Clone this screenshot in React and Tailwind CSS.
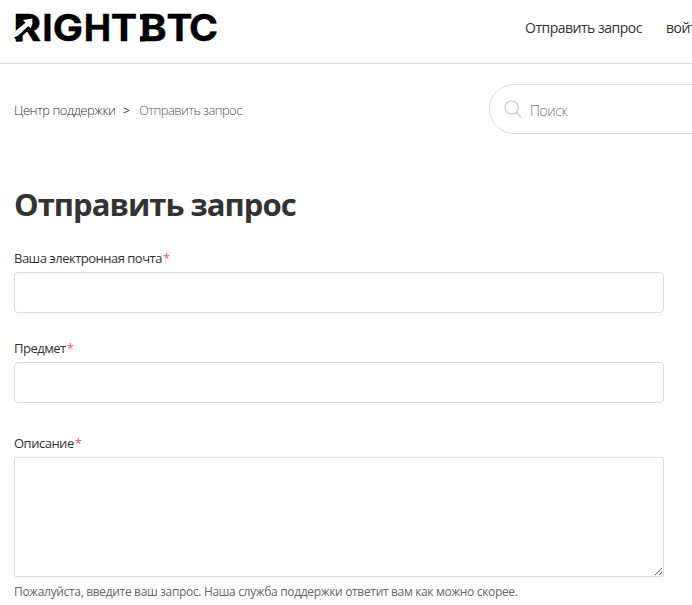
const letters = [
  { c: "R", x: -0.8, sx: 1.15 },
  { c: "I", x: 28.3, sx: 1 },
  { c: "G", x: 38.7, sx: 1.09 },
  { c: "H", x: 69.7, sx: 0.99 },
  { c: "T", x: 96.7, sx: 1.07 },
  { c: "B", x: 126.3, sx: 1.08 },
  { c: "T", x: 152.5, sx: 1.05 },
  { c: "C", x: 175.1, sx: 1.06 },
];

function Logo() {
  return (
    <svg className="block h-[36px] w-[210px] overflow-visible" viewBox="0 0 210 36" role="img">
      {letters.map((l, i) => (
        <text
          key={i}
          transform={`translate(${l.x} 31.3) scale(${l.sx} 1)`}
          fontFamily="Inter, sans-serif"
          fontSize="37"
          fontWeight="700"
          fill="#000"
          stroke="#000"
          strokeWidth="0.4"
        >
          {l.c}
        </text>
      ))}
      <path d="M126 4.2h5v5.2h-5zM126 26.3h5v5.2h-5z" fill="#000" />
      <path d="M2 4.2h14v12L2 20z" fill="#000" />
      <path d="M-1 24.5 L2 20.5 L11.5 12.8 L9 10 L18.5 8.5 L17 18.5 L14.3 16 L4 26.5 L-1 29 Z" fill="#fff" />
      <path d="M0 27.5 C5 26 8.5 22 12.5 17.8 L15 20 L8 26 L8 31.5 L2 31.5 L2 29.5Z" fill="#000" />
    </svg>
  );
}

function Label({ children, className }) {
  return (
    <label className={"block h-[20px] whitespace-nowrap text-[13px] leading-[20px] tracking-[-0.5px] text-[#333] " + className}>
      {children}
      <span className="ml-[1px] text-[#e35b66]">*</span>
    </label>
  );
}

export default function App() {
  return (
    <div className="h-[605px] w-full overflow-hidden bg-white font-['Open_Sans','Noto_Sans',sans-serif] text-[#333]">
      <header className="flex h-[64px] items-start border-b border-[#ddd] pl-[14px]">
        <div className="pt-[10px]">
          <Logo />
        </div>
        <nav className="ml-[301px] flex gap-[24px] pt-[18px] text-[14px] leading-[20px] tracking-[-0.5px] whitespace-nowrap">
          <a className="w-[117px]">Отправить запрос</a>
          <a>войти</a>
        </nav>
      </header>
      <div className="flex h-[90px] pt-[20px] pl-[14px]">
        <div className="flex w-[475px] shrink-0 pt-[16px] text-[13px] leading-[20px] font-light whitespace-nowrap">
          <span className="w-[109px] tracking-[-0.47px]">Центр поддержки</span>
          <span className="w-[16px] pt-px text-[12px] font-normal">&gt;</span>
          <span className="tracking-[-0.58px] text-[#555]">Отправить запрос</span>
        </div>
        <div className="flex h-[50px] w-[320px] shrink-0 items-center rounded-full border border-[#ddd] pl-[14px]">
          <svg className="h-[18px] w-[18px]" viewBox="0 0 18 18" fill="none" stroke="#ccc" strokeWidth="1.3">
            <circle cx="7.7" cy="7.5" r="6.6" />
            <path d="M12.5 12.3 L17 17.2" />
          </svg>
          <span className="pt-[3px] pl-[8px] text-[14px] leading-[20px] font-light tracking-[-0.45px] text-[#777]">Поиск</span>
        </div>
      </div>
      <main className="w-[664px] pl-[14px]">
        <h1 className="mt-[29px] h-[43px] text-[31px] leading-[42px] font-bold tracking-[-0.98px] whitespace-nowrap">Отправить запрос</h1>
        <form>
          <Label className="mt-[22px]">Ваша электронная почта</Label>
          <input className="mt-[4px] block h-[41px] w-full rounded-[4px] border border-[#ddd]" />
          <Label className="mt-[25px]">Предмет</Label>
          <input className="mt-[4px] block h-[41px] w-full rounded-[4px] border border-[#ddd]" />
          <Label className="mt-[30px]">Описание</Label>
          <textarea className="mt-[4px] block h-[120px] w-full resize rounded-[2px] border border-[#ddd]" />
          <p className="mt-[5px] text-[12px] leading-[20px] tracking-[-0.335px] whitespace-nowrap text-[#666]">
            Пожалуйста, введите ваш запрос. Наша служба поддержки ответит вам как можно скорее.
          </p>
        </form>
      </main>
    </div>
  );
}
